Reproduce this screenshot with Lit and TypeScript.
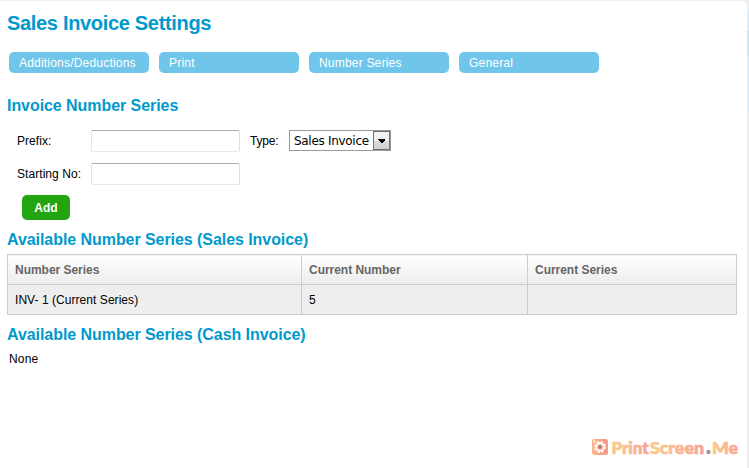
import { LitElement, html, css } from "lit";
import { customElement } from "lit/decorators.js";

@customElement("app-root")
export class AppRoot extends LitElement {
  static styles = css`
    :host {
      display: block;
      box-sizing: border-box;
      width: 749px;
      height: 468px;
      overflow: hidden;
      font: 12px/16px "Liberation Sans", Arial, sans-serif;
      color: #000;
    }
    .page {
      display: flex;
      box-sizing: border-box;
      height: 468px;
      padding-top: 1px;
      background: linear-gradient(#eee 11px, #dceef8 11px 31px, #cce5f0 31px 56px, #dceef8 56px 113px, #eee 113px);
    }
    .panel {
      box-sizing: border-box;
      width: 747px;
      padding: 0 8px 0 7px;
      background: #fff;
      border-radius: 2px 5px 0 0;
      display: flex;
      flex-direction: column;
    }
    h1, h2 { margin: 0; color: #0099cc; font-weight: bold; white-space: nowrap; }
    h1 { font-size: 20px; line-height: 24px; margin-top: 10px; letter-spacing: -0.32px; }
    h2 { font-size: 16px; line-height: 20px; letter-spacing: -0.06px; }
    .tabs { display: flex; gap: 10px; margin: 17px 0 0 2px; }
    .tab {
      box-sizing: border-box;
      width: 140px;
      height: 21px;
      padding-left: 10px;
      line-height: 22px;
      border-radius: 5px;
      background: #6fc6ea;
      color: #fff;
      letter-spacing: 0.2px;
    }
    .series { margin-top: 23px; }
    .form {
      display: grid;
      grid-template-columns: 74px 149px 49px 102px;
      grid-template-rows: 22px 22px;
      row-gap: 11px;
      margin: 14px 0 0 10px;
      line-height: 22px;
      letter-spacing: 0.06px;
    }
    .type { padding-left: 10px; letter-spacing: -0.2px; }
    .field {
      box-sizing: border-box;
      width: 149px;
      height: 22px;
      margin: 0;
      padding: 0 4px;
      border: 1px solid;
      border-color: #abadb3 #dbdfe6 #e3e9ef #e2e3ea;
      border-radius: 2px;
      background: #fff;
      outline: none;
      font: inherit;
    }
    .select {
      box-sizing: border-box;
      display: flex;
      justify-content: space-between;
      width: 102px;
      height: 21px;
      border: 1px solid #999;
      padding-left: 4px;
      font: 12px/20px "DejaVu Sans", Tahoma, sans-serif;
      white-space: nowrap;
    }
    .value { letter-spacing: -0.3px; }
    .drop {
      display: flex;
      align-items: center;
      justify-content: center;
      box-sizing: border-box;
      width: 17px;
      height: 19px;
      border: 1px solid #707070;
      background: linear-gradient(#f2f2f2 50%, #dddddd 50%, #cfcfcf);
    }
    .add {
      box-sizing: border-box;
      width: 48px;
      height: 25px;
      margin: 10px 0 0 15px;
      padding: 1px 0 0;
      border: 0;
      border-radius: 5px;
      background: #23a512;
      color: #fff;
      font: bold 12px/24px "Liberation Sans", Arial, sans-serif;
    }
    .sales { margin-top: 10px; }
    table {
      width: 730px;
      margin-top: 4px;
      border-collapse: collapse;
      table-layout: fixed;
    }
    th, td {
      box-sizing: border-box;
      height: 30px;
      padding: 0 7px;
      border: 1px solid #ccc;
      text-align: left;
    }
    th { color: #666; background: linear-gradient(#fff, #ececec); letter-spacing: -0.03px; }
    td { background: #eee; letter-spacing: 0.05px; }
    .c1 { width: 294px; }
    .c2 { width: 226px; }
    .cash { margin-top: 10px; }
    .none { margin: 6px 0 0 2px; letter-spacing: 0.2px; }
    .mark { display: block; margin: auto 0 10px auto; }
    .word { font: 900 16.5px Lato, "Liberation Sans", sans-serif; stroke-width: 0.7px; }
    .word text { fill: url(#warm); stroke: url(#warm); }
  `;

  render() {
    const tabs = ["Additions/Deductions", "Print", "Number Series", "General"];
    return html`
      <div class="page">
        <main class="panel">
          <h1>Sales Invoice Settings</h1>
          <nav class="tabs">${tabs.map((t) => html`<a class="tab">${t}</a>`)}</nav>
          <h2 class="series">Invoice Number Series</h2>
          <div class="form">
            <label>Prefix:</label><input class="field" />
            <label class="type">Type:</label>
            <div class="select">
              <span class="value">Sales Invoice</span>
              <span class="drop"><svg width="7" height="4" viewBox="0 0 7 4" shape-rendering="crispEdges"><path d="M0 0H7V1L4 4H3L0 1Z" /></svg></span>
            </div>
            <label>Starting No:</label><input class="field" />
          </div>
          <button class="add">Add</button>
          <h2 class="sales">Available Number Series (Sales Invoice)</h2>
          <table>
            <thead><tr><th class="c1">Number Series</th><th class="c2">Current Number</th><th>Current Series</th></tr></thead>
            <tbody><tr><td>INV- 1 (Current Series)</td><td>5</td><td></td></tr></tbody>
          </table>
          <h2 class="cash">Available Number Series (Cash Invoice)</h2>
          <div class="none">None</div>
          <svg class="mark" width="149" height="20" viewBox="0 0 149 20">
            <defs>
              <linearGradient id="warm" x1="0" x2="1"><stop stop-color="#fccb8b" /><stop offset="1" stop-color="#f8a498" /></linearGradient>
              <linearGradient id="lens" x1="0" x2="1"><stop stop-color="#fbb987" /><stop offset="1" stop-color="#f6958d" /></linearGradient>
            </defs>
            <rect x="2" y="1" width="16" height="16" rx="2.5" fill="url(#lens)" />
            <circle cx="10" cy="9" r="5" fill="none" stroke="#fff" stroke-width="1.8" stroke-dasharray="2.2 1.73" />
            <circle cx="10" cy="9" r="3.7" fill="none" stroke="#fff" stroke-width="2" />
            <circle cx="10" cy="9" r="2.5" fill="#f58d83" />
            <circle cx="10" cy="9" r="1" fill="#777" />
            <circle cx="4.5" cy="3.5" r="1" fill="#fff" />
            <g class="word">
              <text x="21.5" y="15.5" textLength="37" lengthAdjust="spacingAndGlyphs">Print</text>
              <text x="60" y="15.5" textLength="54" lengthAdjust="spacingAndGlyphs">Screen</text>
              <text x="122" y="15.5" textLength="26" lengthAdjust="spacingAndGlyphs">Me</text>
            </g>
            <circle cx="118.5" cy="14" r="2.2" fill="#999" />
          </svg>
        </main>
      </div>
    `;
  }
}
